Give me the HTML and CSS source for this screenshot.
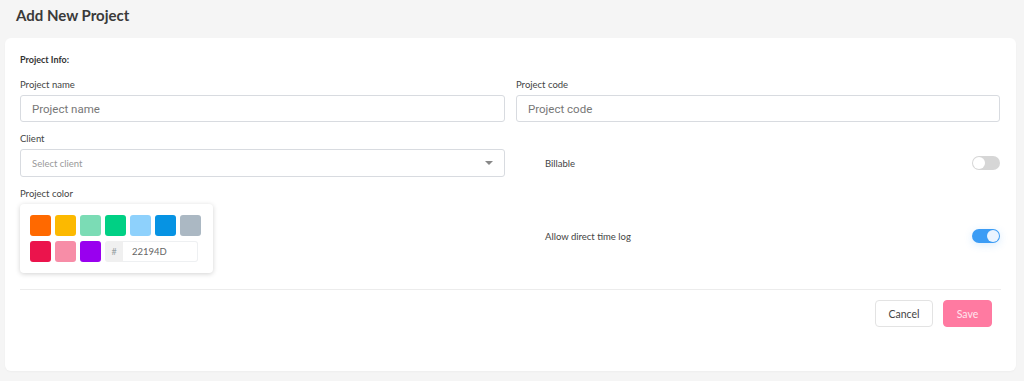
FILE: index.html
```html
<!DOCTYPE html>
<html lang="en">
<head>
    <meta charset="UTF-8">
    <meta name="viewport" content="width=device-width, initial-scale=1.0">
    <title>Add New Project</title>
    <link rel="stylesheet" href="styles.css">
</head>
<body>
    <!-- Page title -->
    <div class="page-title">Add New Project</div>

    <!-- Main form card -->
    <div class="card">
        <div class="section-title">Project Info:</div>

        <div class="form-grid">
            <div class="field">
                <label class="field-label">Project name</label>
                <input class="text-input" type="text" placeholder="Project name">
            </div>
            <div class="field">
                <label class="field-label">Project code</label>
                <input class="text-input" type="text" placeholder="Project code">
            </div>

            <div class="field">
                <label class="field-label">Client</label>
                <div class="select-box">
                    <span class="select-placeholder">Select client</span>
                    <span class="select-caret"></span>
                </div>
            </div>
            <div class="switch-row switch-row-client">
                <span class="switch-label">Billable</span>
                <span class="switch"><span class="switch-knob"></span></span>
            </div>

            <div class="field">
                <label class="field-label">Project color</label>
                <!-- Colour picker with swatches and hex input -->
                <div class="color-picker">
                    <span class="swatch" style="background:#FF6900"></span>
                    <span class="swatch" style="background:#FCB900"></span>
                    <span class="swatch" style="background:#7BDCB5"></span>
                    <span class="swatch" style="background:#00D084"></span>
                    <span class="swatch" style="background:#8ED1FC"></span>
                    <span class="swatch" style="background:#0693E3"></span>
                    <span class="swatch" style="background:#ABB8C3"></span>
                    <span class="swatch" style="background:#EB144C"></span>
                    <span class="swatch" style="background:#F78DA7"></span>
                    <span class="swatch" style="background:#9900EF"></span>
                    <div class="hex-input">
                        <span class="hex-hash">#</span>
                        <span class="hex-value">22194D</span>
                    </div>
                </div>
            </div>
            <div class="switch-row switch-row-color">
                <span class="switch-label">Allow direct time log</span>
                <span class="switch switch-on"><span class="switch-knob"></span></span>
            </div>
        </div>

        <div class="divider"></div>

        <div class="actions">
            <button class="btn btn-cancel">Cancel</button>
            <button class="btn btn-save">Save</button>
        </div>
    </div>
</body>
</html>
```

FILE: styles.css
```css
/* Base page */
html, body {
    margin: 0;
    padding: 0;
    background-color: #f5f5f5;
    font-family: 'Lato', 'Open Sans', sans-serif;
    color: #333;
}

body {
    padding: 0 8px 11px 5px;
}

/* Big heading at the top */
.page-title {
    font-size: 15px;
    font-weight: 700;
    color: #3a3a3a;
    padding: 6px 0 0 11px;
    height: 32px;
}

/* White card holding the form */
.card {
    background: #fff;
    border-radius: 6px;
    padding: 16px 15px 44px 15px;
    box-shadow: 0 1px 2px rgba(0, 0, 0, 0.03);
}

.section-title {
    font-size: 9px;
    font-weight: 700;
    color: #333;
    margin-bottom: 14px;
}

/* Two column form */
.form-grid {
    display: grid;
    grid-template-columns: 485px 484px;
    column-gap: 11px;
    row-gap: 11px;
}

.field {
    display: flex;
    flex-direction: column;
}

.field-label {
    font-size: 9.5px;
    color: #444;
    margin-bottom: 5px;
    line-height: 11px;
}

.text-input {
    height: 27px;
    box-sizing: border-box;
    border: 1px solid #d8dbe0;
    border-radius: 3px;
    padding: 0 11px;
    font-family: 'Roboto', 'Liberation Sans', sans-serif;
    font-size: 11.5px;
    color: #333;
    outline: none;
}

.text-input::placeholder {
    color: #777;
}

/* Fake select dropdown */
.select-box {
    height: 28px;
    box-sizing: border-box;
    border: 1px solid #d8dbe0;
    border-radius: 3px;
    padding: 0 11px;
    display: flex;
    align-items: center;
    justify-content: space-between;
}

.select-placeholder {
    font-size: 9.5px;
    color: #999;
}

.select-caret {
    width: 0;
    height: 0;
    border-left: 4px solid transparent;
    border-right: 4px solid transparent;
    border-top: 4px solid #888;
}

/* Rows with a label and a switch */
.switch-row {
    display: flex;
    align-items: center;
    justify-content: space-between;
    padding-left: 29px;
}

.switch-row-client {
    padding-top: 16px;
}

.switch-row-color {
    padding-top: 13px;
    align-self: start;
    height: 70px;
}

.switch-label {
    font-size: 9.5px;
    color: #444;
}

.switch {
    width: 28px;
    height: 14px;
    border-radius: 7px;
    background: #d6d6d6;
    position: relative;
    display: inline-block;
}

.switch-knob {
    position: absolute;
    top: 1px;
    left: 1px;
    width: 12px;
    height: 12px;
    border-radius: 50%;
    background: #fff;
}

.switch-on {
    background: #3b9cf5;
    box-shadow: 0 2px 8px rgba(59, 156, 245, 0.2);
}

.switch-on .switch-knob {
    left: auto;
    right: 1px;
    background: #eaf4ff;
}

/* Twitter-style colour picker */
.color-picker {
    width: 193px;
    box-sizing: border-box;
    padding: 11px 10px 11px 10px;
    background: #fff;
    border-radius: 4px;
    box-shadow: 0 1px 5px rgba(0, 0, 0, 0.18);
    display: flex;
    flex-wrap: wrap;
    gap: 5px 4px;
}

.swatch {
    width: 21px;
    height: 21px;
    border-radius: 3px;
    display: inline-block;
}

.hex-input {
    display: flex;
    height: 21px;
}

.hex-hash {
    width: 18px;
    background: #f0f0f0;
    border-radius: 3px 0 0 3px;
    color: #98a1a4;
    font-size: 9px;
    display: flex;
    align-items: center;
    justify-content: center;
}

.hex-value {
    width: 75px;
    box-sizing: border-box;
    border: 1px solid #eef0f2;
    border-left: none;
    border-radius: 0 3px 3px 0;
    color: #666;
    font-size: 9.5px;
    padding-left: 9px;
    display: flex;
    align-items: center;
}

.divider {
    height: 1px;
    background: #ececec;
    margin-top: 16px;
}

/* Bottom buttons */
.actions {
    display: flex;
    justify-content: flex-end;
    gap: 10px;
    padding: 10px 9px 0 0;
}

.btn {
    height: 27px;
    border-radius: 4px;
    font-family: 'Lato', 'Open Sans', sans-serif;
    font-size: 10.5px;
    cursor: pointer;
}

.btn-cancel {
    width: 58px;
    background: #fff;
    border: 1px solid #e3e3e3;
    color: #444;
}

.btn-save {
    width: 49px;
    background: #ff7aa1;
    border: 1px solid #ff7aa1;
    color: #ffe6ee;
}
```
